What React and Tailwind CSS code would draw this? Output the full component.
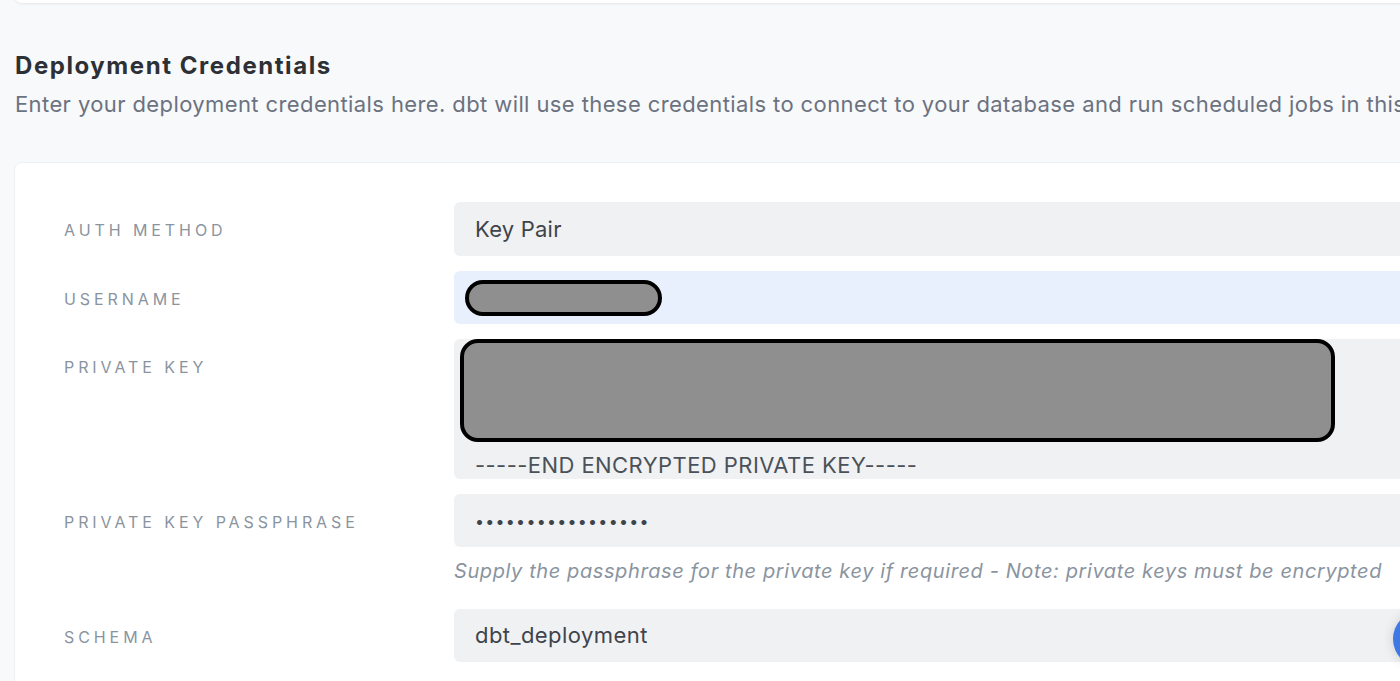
import React from "react";

const font = { fontFamily: "Inter, Roboto, 'Liberation Sans', sans-serif" };

function Label({ children }) {
  return (
    <div className="w-[390px] shrink-0 pt-[19px] text-[16px] leading-[18px] tracking-[0.245em] text-[#8a949f] uppercase">
      {children}
    </div>
  );
}

export default function App() {
  return (
    <div className="relative h-[681px] w-[1400px] overflow-hidden bg-[#f8f9fb]" style={font}>
      {/* top card remnant */}
      <div className="-mt-[20px] ml-[14px] h-[23px] w-[1500px] rounded-b-[8px] bg-white shadow-[0_1px_3px_rgba(0,0,0,0.08)]" />

      <div className="ml-[15px] mt-[47px]">
        <h2 className="text-[24px] font-bold leading-[32px] tracking-[0.065em] text-[#2d3035]">Deployment Credentials</h2>
        <p className="mt-[9px] whitespace-nowrap text-[22px] leading-[26px] tracking-[0.018em] text-[#6b7280]">
          Enter your deployment credentials here. dbt will use these credentials to connect to your database and run scheduled jobs in this
        </p>
      </div>

      <div className="ml-[14px] mt-[45px] w-[1500px] rounded-[8px] border border-[#eef0f2] bg-white pl-[49px] pt-[39px] pb-[40px]">
        <div className="flex flex-col">
          {/* Auth method */}
          <div className="flex">
            <Label>Auth Method</Label>
            <div className="flex h-[54px] flex-1 items-center rounded-[6px] bg-[#f0f1f3] px-[21px] text-[22px] tracking-[0.01em] text-[#3f444b]">
              Key Pair
            </div>
          </div>

          {/* Username */}
          <div className="mt-[15px] flex">
            <Label>Username</Label>
            <div className="flex h-[53px] flex-1 items-center rounded-[6px] bg-[#e8f0fe] px-[11px]">
              <div className="h-[36px] w-[197px] rounded-full border-[4px] border-black bg-[#8f8f8f]" />
            </div>
          </div>

          {/* Private key */}
          <div className="mt-[15px] flex">
            <Label>Private Key</Label>
            <div className="relative flex h-[140px] flex-1 flex-col justify-end overflow-hidden rounded-[6px] bg-[#f0f1f3] px-[21px] pb-[1px]">
              <div className="mb-[12px] h-0 w-[205px] border-b-[3px] border-dotted border-[#f0605a]" />
              <div className="text-[22px] leading-[26px] tracking-[0.02em] text-[#4b5158]">-----END ENCRYPTED PRIVATE KEY-----</div>
              <div className="absolute left-[6px] top-0 h-[103px] w-[875px] rounded-[18px] border-[4px] border-black bg-[#8f8f8f]" />
            </div>
          </div>

          {/* Passphrase */}
          <div className="mt-[15px] flex">
            <Label>Private Key Passphrase</Label>
            <div className="flex flex-1 flex-col">
              <div className="flex h-[53px] items-center rounded-[6px] bg-[#f0f1f3] px-[21px] text-[16px] tracking-[0.08em] text-[#3f444b]">
                •••••••••••••••••
              </div>
              <div className="mt-[11px] whitespace-nowrap text-[20px] italic leading-[26px] tracking-[0.03em] text-[#8a949f]">
                Supply the passphrase for the private key if required - Note: private keys must be encrypted
              </div>
            </div>
          </div>

          {/* Schema */}
          <div className="mt-[25px] flex">
            <Label>Schema</Label>
            <div className="flex h-[53px] flex-1 items-center rounded-[6px] bg-[#f0f1f3] px-[21px] text-[22px] tracking-[0.02em] text-[#3f444b]">
              dbt_deployment
            </div>
          </div>
        </div>
      </div>

      {/* floating button */}
      <div className="absolute left-[1393px] top-[611px] h-[56px] w-[56px] rounded-full bg-[#3d78e3] shadow-[0_0_12px_rgba(0,0,0,0.15)]" />
    </div>
  );
}
